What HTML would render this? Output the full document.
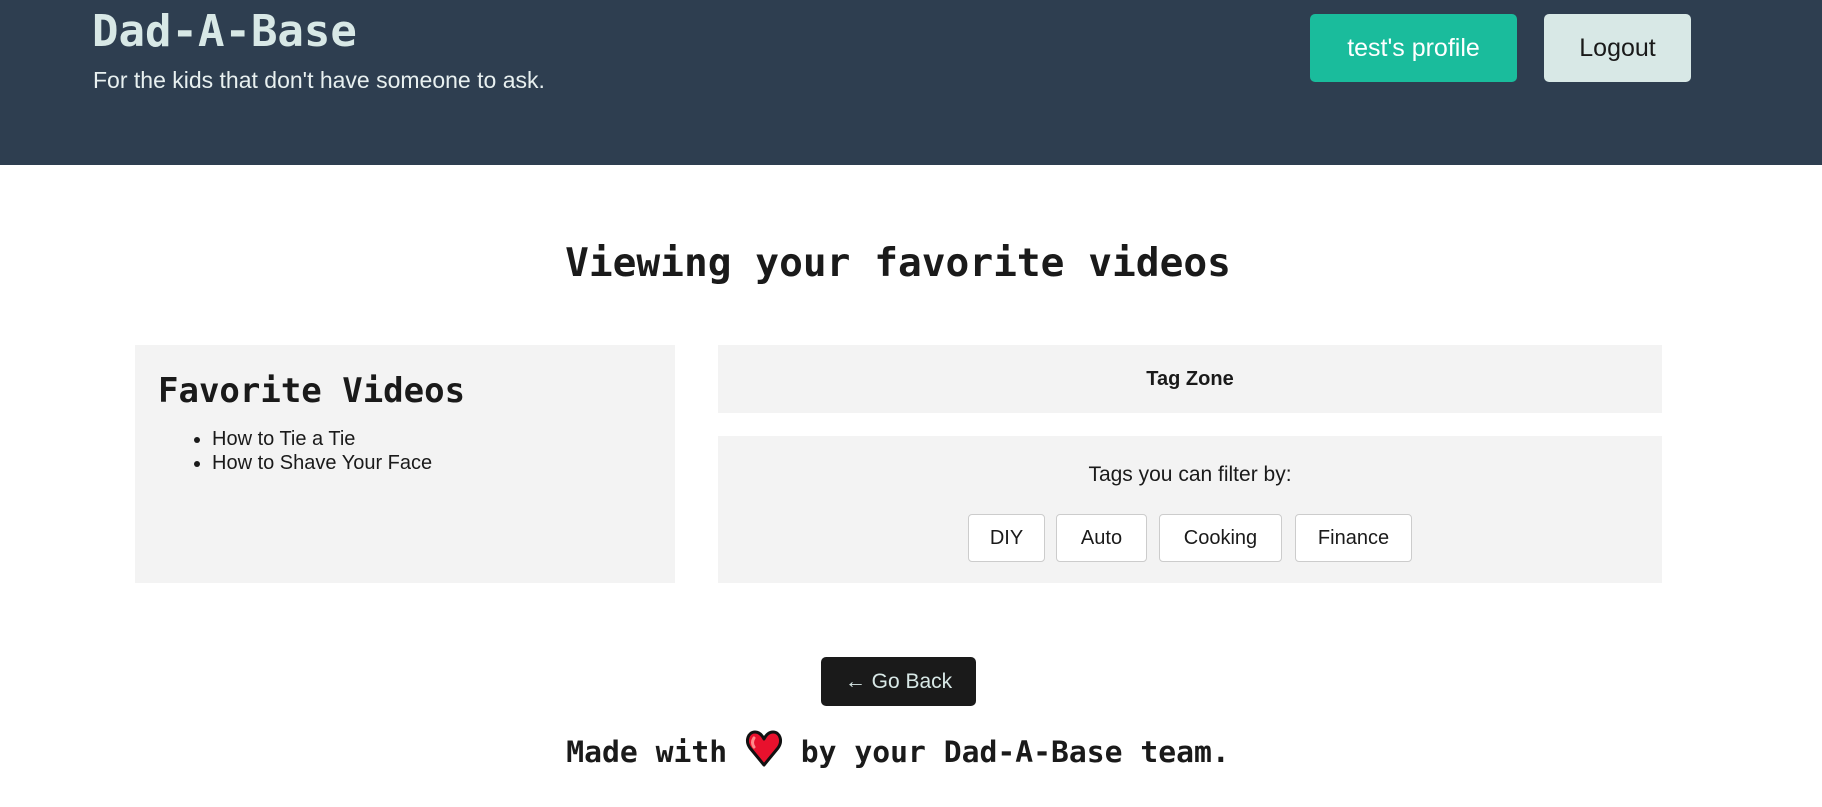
<!DOCTYPE html>
<html><head><meta charset="utf-8"><style>
*{box-sizing:border-box;margin:0;padding:0}
body{width:1822px;height:807px;position:relative;background:#fff;font-family:"Liberation Sans","DejaVu Sans",sans-serif;color:#1a1a1a;overflow:hidden}
.mono{font-family:"DejaVu Sans Mono","Liberation Mono",monospace;font-weight:bold}
header{position:absolute;left:0;top:0;width:1822px;height:165px;background:#2e3e50}
.abs{position:absolute}
.btn{position:absolute;border-radius:5px;display:flex;align-items:center;justify-content:center;font-size:25px}
.panel{position:absolute;background:#f3f3f3}
.tag{position:absolute;top:514px;height:48px;background:#fff;border:1px solid #ccc;border-radius:4px;display:flex;align-items:center;justify-content:center;font-size:20px}
</style></head><body>
<header>
<div class="abs mono" style="left:92px;top:6px;font-size:44px;color:#d8e8e6">Dad-A-Base</div>
<div class="abs" style="left:93px;top:67px;font-size:23px;color:#e8f0f0">For the kids that don't have someone to ask.</div>
<div class="btn" style="left:1310px;top:14px;width:207px;height:68px;background:#1abc9c;color:#fff">test's profile</div>
<div class="btn" style="left:1544px;top:14px;width:147px;height:68px;background:#d8e8e6;color:#1a1a1a">Logout</div>
</header>
<div class="abs mono" style="left:0;width:1796px;text-align:center;top:240px;font-size:39.5px">Viewing your favorite videos</div>
<div class="panel" style="left:135px;top:345px;width:540px;height:238px">
<div class="mono" style="position:absolute;left:23px;top:26px;font-size:34px">Favorite Videos</div>
<ul style="position:absolute;left:77px;top:82px;font-size:20px;line-height:24px">
<li>How to Tie a Tie</li><li>How to Shave Your Face</li></ul>
</div>
<div class="panel" style="left:718px;top:345px;width:944px;height:68px;display:flex;align-items:center;justify-content:center;font-weight:bold;font-size:20px">Tag Zone</div>
<div class="panel" style="left:718px;top:436px;width:944px;height:147px">
<div style="position:absolute;left:0;width:944px;text-align:center;top:27px;font-size:21px">Tags you can filter by:</div>
</div>
<div class="tag" style="left:968px;width:77px">DIY</div>
<div class="tag" style="left:1056px;width:91px">Auto</div>
<div class="tag" style="left:1159px;width:123px">Cooking</div>
<div class="tag" style="left:1295px;width:117px">Finance</div>
<div class="btn" style="left:821px;top:657px;width:155px;height:49px;background:#1a1a1a;color:#d8e8e6;font-size:21px">← Go Back</div>
<div class="abs mono" style="left:0;width:1796px;text-align:center;top:728px;font-size:29.7px;white-space:pre">Made with <svg width="38" height="40" viewBox="0 0 38 40" style="vertical-align:-6px"><path d="M19 37 L5 20 C0 13 3 4 10 4 C14 4 17 7 19 11 C21 7 24 4 28 4 C35 4 38 13 33 20 Z" fill="#e8112d" stroke="#111" stroke-width="3" stroke-linejoin="round"/><path d="M9 10 C7 13 7 16 9 19" stroke="#ff8a8a" stroke-width="3" fill="none" stroke-linecap="round"/></svg> by your Dad-A-Base team.</div>
</body></html>
